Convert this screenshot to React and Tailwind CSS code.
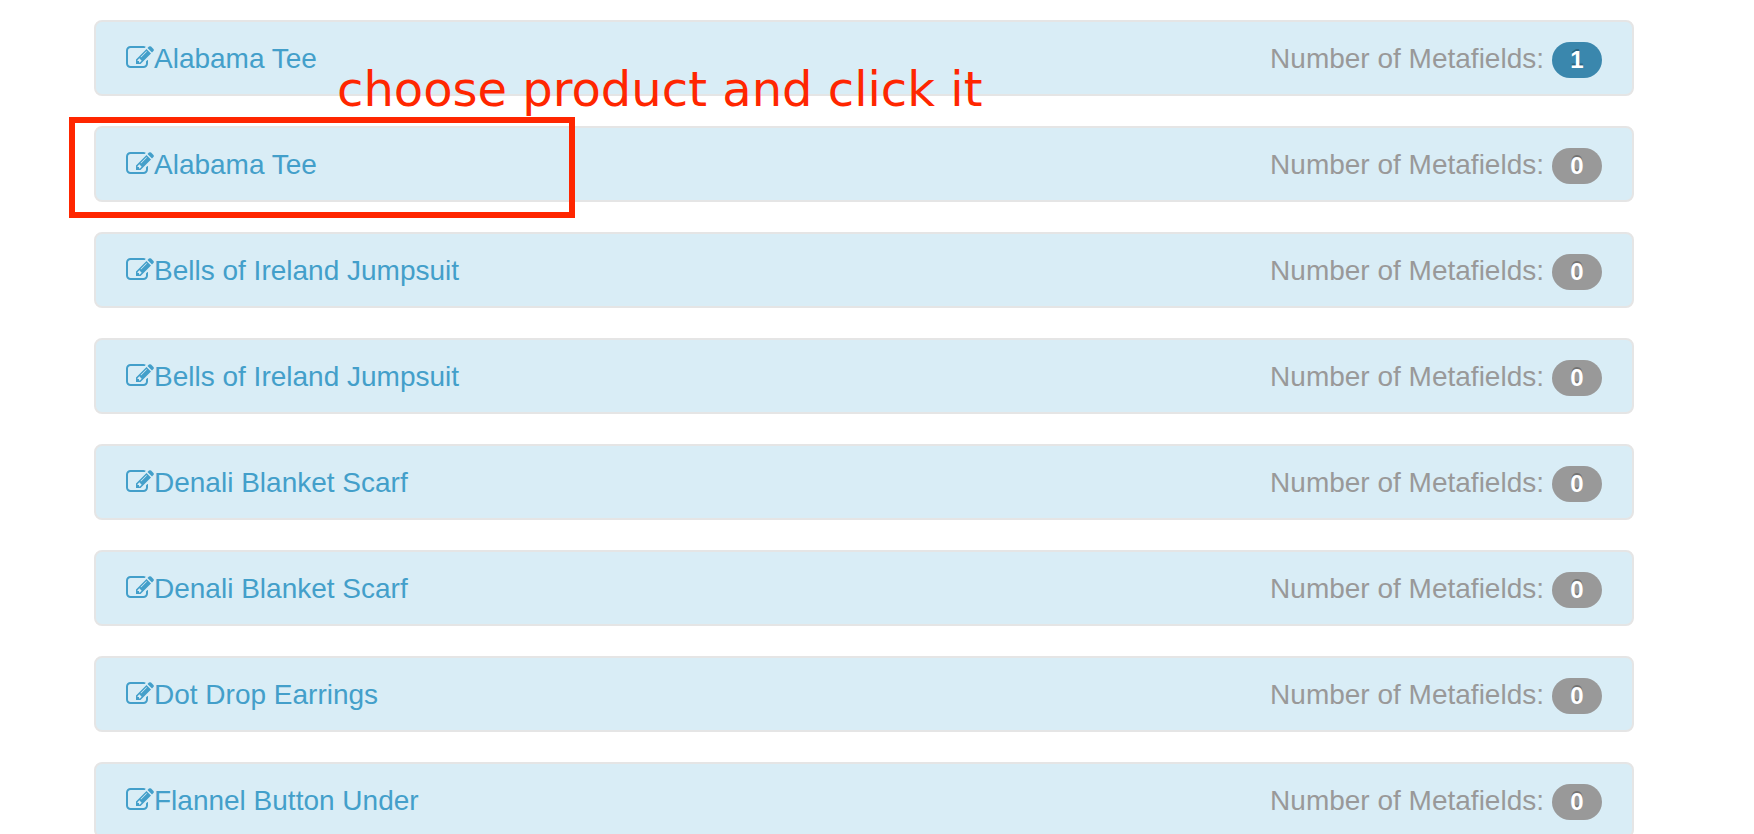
const products = [
  { id: 1, name: 'Alabama Tee', count: 1 },
  { id: 2, name: 'Alabama Tee', count: 0, highlighted: true },
  { id: 3, name: 'Bells of Ireland Jumpsuit', count: 0 },
  { id: 4, name: 'Bells of Ireland Jumpsuit', count: 0 },
  { id: 5, name: 'Denali Blanket Scarf', count: 0 },
  { id: 6, name: 'Denali Blanket Scarf', count: 0 },
  { id: 7, name: 'Dot Drop Earrings', count: 0 },
  { id: 8, name: 'Flannel Button Under', count: 0 },
];

function EditIcon() {
  return (
    <svg viewBox="0 0 1792 1792" className="size-7 shrink-0 fill-current" aria-hidden="true">
      <path d="M888 1184l116-116-152-152-116 116v56h96v96h56zm440-720q-16-16-33 1l-350 350q-17 17-1 33t33-1l350-350q17-17 1-33zm80 594v190q0 119-84.5 203.5t-203.5 84.5h-832q-119 0-203.5-84.5t-84.5-203.5v-832q0-119 84.5-203.5t203.5-84.5h832q63 0 117 25 15 7 18 23 3 17-9 29l-49 49q-14 14-32 8-23-6-45-6h-832q-66 0-113 47t-47 113v832q0 66 47 113t113 47h832q66 0 113-47t47-113v-126q0-13 9-22l64-64q15-15 35-7t20 29zm-96-738l288 288-672 672h-288v-288zm444 132l-92 92-288-288 92-92q28-28 68-28t68 28l152 152q28 28 28 68t-28 68z" />
    </svg>
  );
}

function Callout() {
  return (
    <div className="pointer-events-none absolute -top-[9px] -left-[25px] h-[101px] w-[506px] border-6 border-[#ff2600]">
      <p className="absolute bottom-full left-[262px] pb-1.5 font-['DejaVu_Sans',Verdana,sans-serif] text-[48px] leading-14 whitespace-nowrap text-[#ff2600]">
        choose product and click it
      </p>
    </div>
  );
}

function ProductRow({ product }) {
  return (
    <li className="relative">
      <div className="flex items-center justify-between rounded-lg border-2 border-[#e5e5e5] bg-[#d9edf6] px-[30px] py-4">
        <a href={`#product-${product.id}`} className="flex items-center text-[#439fca]">
          <EditIcon />
          <span className="pt-0.5">{product.name}</span>
        </a>
        <div className="flex items-center gap-2 text-[#999999]">
          <span className="pt-0.5">Number of Metafields:</span>
          <span
            className={`mt-1 w-[50px] rounded-full text-center text-2xl leading-9 font-bold text-white [text-shadow:0_-2px_0_rgba(0,0,0,0.25)] ${
              product.count > 0 ? 'bg-[#3a87ad]' : 'bg-[#999999]'
            }`}
          >
            {product.count}
          </span>
        </div>
      </div>
      {product.highlighted && <Callout />}
    </li>
  );
}

export default function App() {
  return (
    <main className="h-screen overflow-hidden bg-white pt-5 pr-[120px] pl-[94px] font-['Liberation_Sans',Arial,sans-serif] text-[28px] leading-9">
      <ul className="flex flex-col gap-[30px]">
        {products.map((product) => (
          <ProductRow key={product.id} product={product} />
        ))}
      </ul>
    </main>
  );
}
